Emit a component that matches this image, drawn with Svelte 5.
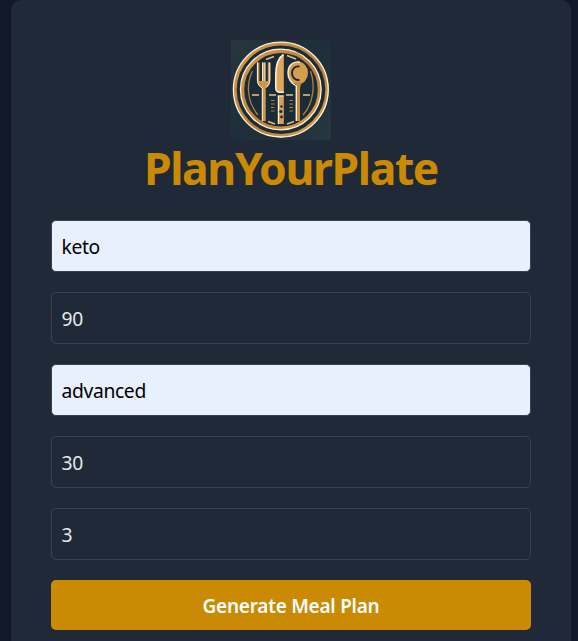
<script>
  let fields = $state([
    { name: 'diet', value: 'keto', filled: true },
    { name: 'weight', value: '90' },
    { name: 'level', value: 'advanced', filled: true },
    { name: 'days', value: '30' },
    { name: 'meals', value: '3' }
  ]);
</script>

<main>
  <form class="card" onsubmit={(e) => e.preventDefault()}>
    <header>
      <svg class="logo" viewBox="0 0 100 100" fill="none" aria-label="PlanYourPlate logo">
        <defs>
          <linearGradient id="bg" x1="0" y1="0" x2="1" y2="1">
            <stop offset="0" stop-color="#27363e" />
            <stop offset=".5" stop-color="#1e2e3a" />
            <stop offset="1" stop-color="#263740" />
          </linearGradient>
          <linearGradient id="gold" x1="0" y1="0" x2="1" y2="1">
            <stop offset="0" stop-color="#d49c48" />
            <stop offset=".55" stop-color="#b97e34" />
            <stop offset="1" stop-color="#d9a350" />
          </linearGradient>
        </defs>
        <rect width="100" height="100" rx="2" fill="url(#bg)" />
        <circle cx="50" cy="49.7" r="45" fill="#1b2c39" />
        <circle cx="50" cy="49.7" r="46" stroke="url(#gold)" stroke-width="3.4" />
        <circle cx="49.8" cy="49.6" r="47.4" stroke="#fbf0de" stroke-width="1.3" />
        <circle cx="50" cy="49.7" r="38.6" stroke="url(#gold)" stroke-width="3.6" />
        <circle cx="49.8" cy="49.5" r="40.3" stroke="#faeedb" stroke-width="1.3" />
        <g stroke="#b27c3c" stroke-width="1.3">
          <path d="M21.5 31C15 44 16 62 27 75M79.5 31C84 43 83.5 62 72 75" />
          <path d="M35 19.5L43 16.5M56 15.5L65 19M37 81.5L44 84M56 84L63 81.5" stroke="#e4bc7a" stroke-width="1.6" />
          <path d="M21 55H28M38 55H45M55 55H62M72 55H79" stroke="#e7c38b" />
          <path d="M40 60.5H43.5M40 64H43.5M40 67.5H43.5M40 71H43.5M58.5 60.5H62M58.5 64H62M58.5 67.5H62M58.5 71H62" stroke-width="1.2" />
        </g>
        <path d="M26 22.5V40C26 44 28 46.5 31 48V81H34.7V48C37.5 46.5 39.2 44 39.2 40V22.5H36.8V41H34V22.5H31.2V41H28.4V22.5Z" fill="#cf9648" />
        <path d="M26.4 22.5V40C26.4 44 28.4 46.5 31.3 48V81M31.6 22.5V41M38.8 22.5V40C38.8 43 37.5 45.5 35 47.5M34 22.5V41" stroke="#fff3df" stroke-width="1" />
        <path d="M52.8 14.5C46.5 18 44.3 26 44.3 35V48C44.3 50 46 52 48 52.5H52.8Z" fill="#dda75c" />
        <path d="M52.5 14.5C46.8 18 44.8 26 44.8 35V48C44.8 50 46.2 51.8 48 52.2H52.8" stroke="#fff5e5" stroke-width="1.5" />
        <path d="M47 55.5H52.8V84H47Z" fill="#d7a055" />
        <path d="M47.4 55.5V84M46.5 56H52.8" stroke="#fff0d9" stroke-width="1.2" />
        <g fill="#172936">
          <circle cx="50.5" cy="66.5" r="1.2" />
          <circle cx="49.8" cy="71.5" r="1.6" />
          <circle cx="50.5" cy="77" r="1.4" />
        </g>
        <ellipse cx="67" cy="33" rx="10" ry="11.2" fill="#d59d50" />
        <path d="M65 42H70.5L69 48V81H65.2Z" fill="#c68b3e" />
        <path d="M69 22.2C62 20.5 57 26 57 33C57 39 60 43 65.3 46V81" stroke="#fff0d8" stroke-width="1.4" />
        <path d="M68.5 26.5C58.5 25 58.5 41 68.5 40" stroke="#182a36" stroke-width="1.9" />
      </svg>
      <h1>PlanYourPlate</h1>
    </header>

    <div class="fields">
      {#each fields as field (field.name)}
        <input class:filled={field.filled} name={field.name} aria-label={field.name} bind:value={field.value} autocomplete="off" spellcheck="false" />
      {/each}
    </div>
    <button type="submit">Generate Meal Plan</button>
  </form>
</main>

<style>
  :global(body) {
    margin: 0;
    background: #111827;
    overflow: hidden;
  }
  main {
    box-sizing: border-box;
    height: 641px;
    padding: 0 7px 0 11px;
    overflow: hidden;
    background: #111827;
    font-family: 'Segoe UI', 'Noto Sans', 'Open Sans', sans-serif;
  }
  .card {
    box-sizing: border-box;
    height: 670px;
    padding: 40px;
    border-radius: 10px;
    background: #1f2937;
  }
  header {
    display: flex;
    flex-direction: column;
    align-items: center;
  }
  .logo {
    display: block;
    width: 100px;
    height: 100px;
    margin-right: 20px;
  }
  h1 {
    margin: 0 0 20px;
    height: 60px;
    line-height: 56px;
    color: #ca8a04;
    font-size: 44.5px;
    font-weight: 700;
    letter-spacing: -1.4px;
    white-space: nowrap;
  }
  .fields {
    display: flex;
    flex-direction: column;
    gap: 20px;
  }
  input {
    box-sizing: border-box;
    width: 100%;
    height: 52px;
    padding: 1px 9.5px 0;
    border: 1px solid #374151;
    border-radius: 5px;
    outline: none;
    background: transparent;
    color: #e5e7eb;
    font: 400 19.3px 'Segoe UI', 'Noto Sans', 'Open Sans', sans-serif;
    letter-spacing: -0.35px;
  }
  .filled {
    background: #e8f0fe;
    color: #000;
  }
  button {
    display: block;
    width: 100%;
    height: 50px;
    margin-top: 20px;
    padding: 2px 0 0;
    border: 0;
    border-radius: 5px;
    background: #ca8a04;
    color: #fff;
    font: 600 19px 'Segoe UI', 'Noto Sans', 'Open Sans', sans-serif;
    letter-spacing: -0.25px;
  }
</style>
